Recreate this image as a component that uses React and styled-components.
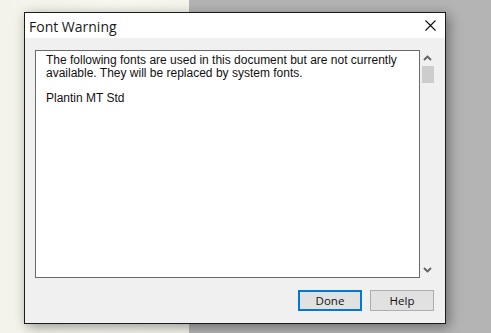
import React from 'react';
import styled, { createGlobalStyle } from 'styled-components';

const GlobalStyle = createGlobalStyle`
  html, body {
    margin: 0;
    padding: 0;
    overflow: hidden;
  }
`;

const Desktop = styled.div`
  position: relative;
  width: 491px;
  height: 333px;
  display: flex;
  overflow: hidden;
`;

const Paper = styled.div`
  width: 189px;
  background: linear-gradient(90deg, #f4f3ea 0%, #f8f7f0 60%, #f6f5ed 100%);
`;

const Backdrop = styled.div`
  flex: 1;
  background: #b4b4b4;
`;

const Dialog = styled.div`
  position: absolute;
  left: 24px;
  top: 12px;
  width: 420px;
  height: 310px;
  border: 1px solid #1b1b1b;
  background: #f0f0f0;
  display: flex;
  flex-direction: column;
  box-shadow: 3px 3px 12px rgba(0, 0, 0, 0.4);
`;

const TitleBar = styled.div`
  height: 25px;
  background: #fff;
  display: flex;
  align-items: center;
  justify-content: space-between;
  padding: 0 8px 0 4px;
`;

const Title = styled.span`
  font-family: 'Open Sans', 'Noto Sans', sans-serif;
  font-size: 14px;
  color: #1a1a1a;
  line-height: 1;
  padding-top: 2px;
`;

const CloseButton = styled.div`
  width: 14px;
  height: 14px;
  display: flex;
  align-items: center;
  justify-content: center;
`;

const Body = styled.div`
  flex: 1;
  display: flex;
  flex-direction: column;
  padding: 12px 11px 12px 10px;
`;

const ListRow = styled.div`
  display: flex;
  height: 228px;
`;

const ListBox = styled.div`
  border: 1px solid #6a6a6a;
  background: #fff;
  padding: 3px 0 0 10px;
  box-sizing: border-box;
  width: 388px;
  height: 228px;
  font-family: 'Liberation Sans', Arial, sans-serif;
  font-size: 12px;
  line-height: 13px;
  color: #111;
`;

const Para = styled.p`
  margin: ${(p) => (p.gap ? '12px' : '0')} 0 0 0;
`;

const ScrollBar = styled.div`
  width: 13px;
  margin-left: 1px;
  display: flex;
  flex-direction: column;
  align-items: center;
`;

const Arrow = styled.div`
  height: 16px;
  display: flex;
  align-items: center;
  justify-content: center;
`;

const Thumb = styled.div`
  width: 12px;
  height: 17px;
  background: #cdcdcd;
`;

const Spacer = styled.div`
  flex: 1;
`;

const ButtonRow = styled.div`
  margin-top: 12px;
  display: flex;
  justify-content: flex-end;
  gap: 8px;
`;

const Button = styled.div`
  width: 64px;
  height: 21px;
  box-sizing: border-box;
  background: #e1e1e1;
  border: ${(p) => (p.primary ? '2px solid #0078d7' : '1px solid #adadad')};
  display: flex;
  align-items: center;
  justify-content: center;
  font-family: 'Open Sans', 'Noto Sans', sans-serif;
  font-size: 11.5px;
  color: #111;
`;

const Chevron = ({ up }) => (
  <svg width="9" height="6" viewBox="0 0 9 6">
    <path
      d={up ? 'M1 5 L4.5 1.5 L8 5' : 'M1 1 L4.5 4.5 L8 1'}
      fill="none"
      stroke="#606060"
      strokeWidth="1.8"
    />
  </svg>
);

const App = () => (
  <>
    <GlobalStyle />
    <Desktop>
      <Paper />
      <Backdrop />
      <Dialog>
        <TitleBar>
          <Title>Font Warning</Title>
          <CloseButton>
            <svg width="11" height="11" viewBox="0 0 11 11">
              <path d="M0.5 0.5 L10.5 10.5 M10.5 0.5 L0.5 10.5" stroke="#111" strokeWidth="1.1" />
            </svg>
          </CloseButton>
        </TitleBar>
        <Body>
          <ListRow>
            <ListBox>
              <Para>
                The following fonts are used in this document but are not currently
                <br />
                available. They will be replaced by system fonts.
              </Para>
              <Para gap>Plantin MT Std</Para>
            </ListBox>
            <ScrollBar>
              <Arrow>
                <Chevron up />
              </Arrow>
              <Thumb />
              <Spacer />
              <Arrow>
                <Chevron />
              </Arrow>
            </ScrollBar>
          </ListRow>
          <ButtonRow>
            <Button primary>Done</Button>
            <Button>Help</Button>
          </ButtonRow>
        </Body>
      </Dialog>
    </Desktop>
  </>
);

export default App;
